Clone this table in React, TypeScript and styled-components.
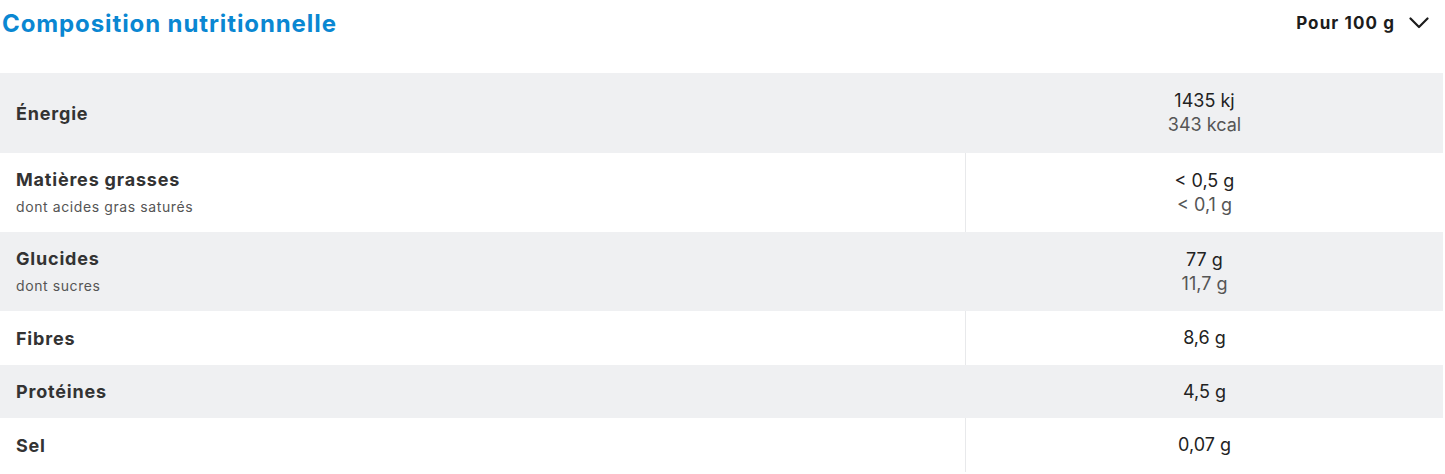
import React from 'react';
import styled, { createGlobalStyle } from 'styled-components';

const GlobalStyle = createGlobalStyle`
  body {
    margin: 0;
    background: #fff;
    font-family: Inter, "Liberation Sans", sans-serif;
    color: #2b2b2b;
  }
`;

const Wrapper = styled.section`
  width: 1443px;
`;

const Header = styled.header`
  display: flex;
  align-items: center;
  justify-content: space-between;
  height: 46px;
  padding: 0 14px 0 2px;
  margin-bottom: 27px;
`;

const Title = styled.h2`
  margin: 0;
  font-size: 24px;
  font-weight: 700;
  color: #0a87d2;
  letter-spacing: 0.9px;
`;

const Portion = styled.button`
  display: flex;
  align-items: center;
  gap: 14px;
  border: 0;
  background: none;
  padding: 0;
  font-family: inherit;
  font-size: 17px;
  font-weight: 700;
  letter-spacing: 1.1px;
  color: #1c1c1c;
  cursor: pointer;
`;

const Table = styled.div`
  display: flex;
  flex-direction: column;
`;

const Row = styled.div<{ $shaded: boolean }>`
  display: grid;
  grid-template-columns: 966px 1fr;
  background: ${(p) => (p.$shaded ? '#eff0f2' : '#fff')};
`;

const LabelCell = styled.div<{ $shaded: boolean }>`
  display: flex;
  flex-direction: column;
  justify-content: center;
  padding: 14px 16px;
  border-right: 1px solid ${(p) => (p.$shaded ? 'transparent' : '#e8e9eb')};
`;

const Label = styled.span`
  font-size: 18px;
  font-weight: 700;
  line-height: 25px;
  letter-spacing: 0.8px;
  color: #333;
`;

const SubLabel = styled.span`
  font-size: 14px;
  line-height: 22px;
  margin-top: 4px;
  letter-spacing: 0.6px;
  color: #555;
`;

const ValueCell = styled.div`
  display: flex;
  flex-direction: column;
  align-items: center;
  justify-content: center;
  padding: 14px 0;
`;

const Value = styled.span<{ $secondary?: boolean }>`
  font-size: 18px;
  line-height: 24px;
  color: ${(p) => (p.$secondary ? '#555' : '#222')};
`;

type Nutrient = {
  label: string;
  sub?: string;
  values: string[];
  height: number;
};

const rows: Nutrient[] = [
  { label: 'Énergie', values: ['1435 kj', '343 kcal'], height: 80 },
  { label: 'Matières grasses', sub: 'dont acides gras saturés', values: ['< 0,5 g', '< 0,1 g'], height: 79 },
  { label: 'Glucides', sub: 'dont sucres', values: ['77 g', '11,7 g'], height: 79 },
  { label: 'Fibres', values: ['8,6 g'], height: 54 },
  { label: 'Protéines', values: ['4,5 g'], height: 53 },
  { label: 'Sel', values: ['0,07 g'], height: 54 },
];

const Chevron = () => (
  <svg width="20" height="12" viewBox="0 0 20 12" fill="none">
    <path d="M1.5 1.5 L10 10 L18.5 1.5" stroke="#1c1c1c" strokeWidth="2.2" strokeLinecap="round" strokeLinejoin="round" />
  </svg>
);

export default function App() {
  return (
    <>
      <GlobalStyle />
      <Wrapper>
        <Header>
          <Title>Composition nutritionnelle</Title>
          <Portion>
            Pour 100 g
            <Chevron />
          </Portion>
        </Header>
        <Table>
          {rows.map((r, i) => {
            const shaded = i % 2 === 0;
            // the first row has no divider between label and value
            return (
              <Row key={r.label} $shaded={shaded} style={{ height: r.height }}>
                <LabelCell $shaded={shaded || i === 0}>
                  <Label>{r.label}</Label>
                  {r.sub && <SubLabel>{r.sub}</SubLabel>}
                </LabelCell>
                <ValueCell>
                  {r.values.map((v, j) => (
                    <Value key={v} $secondary={j > 0}>{v}</Value>
                  ))}
                </ValueCell>
              </Row>
            );
          })}
        </Table>
      </Wrapper>
    </>
  );
}
